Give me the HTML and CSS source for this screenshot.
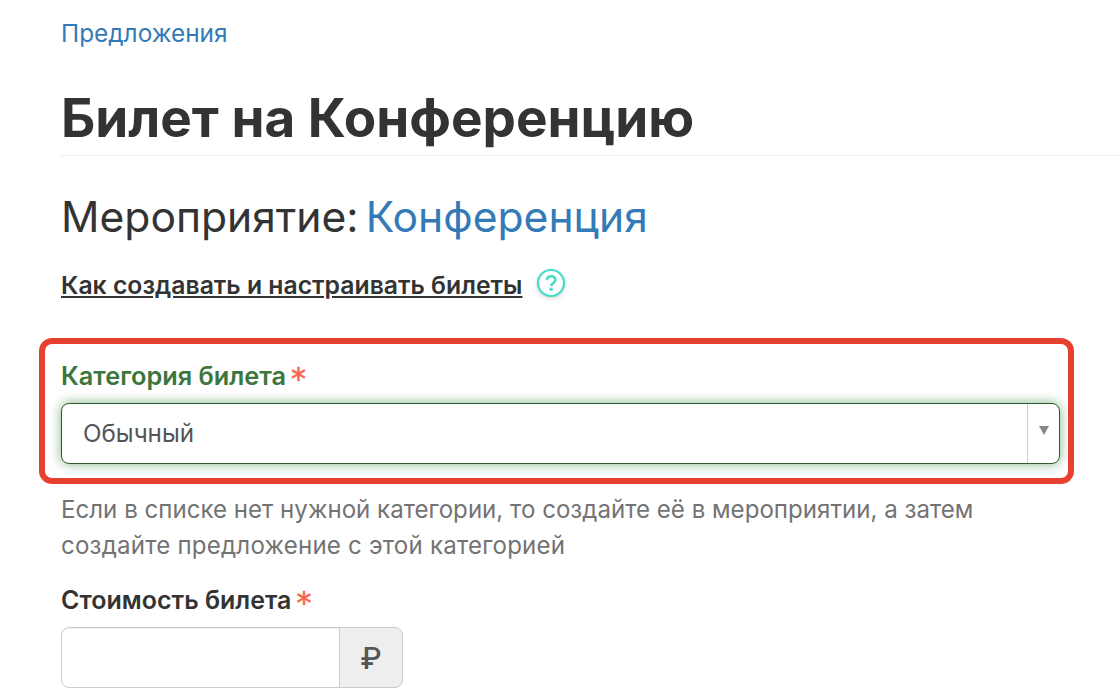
FILE: index.html
```html
<!DOCTYPE html>
<html lang="ru">
<head>
    <meta charset="UTF-8">
    <title>Билет на Конференцию</title>
    <link rel="stylesheet" href="styles.css">
</head>
<body>
    <div class="page">
        <a href="#" class="breadcrumb">Предложения</a>
        <h1 class="page-title">Билет на Конференцию</h1>
        <h2 class="event-title">Мероприятие: <a href="#">Конференция</a></h2>

        <div class="help-row">
            <a href="#" class="help-link">Как создавать и настраивать билеты</a>
            <svg class="help-icon" width="30" height="30" viewBox="0 0 30 30">
                <circle cx="15" cy="14" r="13" fill="#fff" stroke="#45dcc8" stroke-width="2.200"/>
                <path d="M10.8 11.2c.2-2.6 2-4 4.300-4 2.500 0 4.200 1.500 4.200 3.600 0 1.700-.9 2.500-2.100 3.300-1.200.8-1.900 1.400-1.900 2.900" fill="none" stroke="#45dcc8" stroke-width="2.600"/>
                <circle cx="15.100" cy="20.300" r="1.800" fill="#45dcc8"/>
            </svg>
        </div>

        <div class="form-group category-group">
            <label class="field-label" for="category">Категория билета <span class="required">*</span></label>
            <div class="select-box" id="category">
                <span class="select-value">Обычный</span>
                <span class="select-arrow"></span>
            </div>
            <div class="highlight-frame"></div>
        </div>
        <p class="hint">Если в списке нет нужной категории, то создайте её в мероприятии, а затем<br><span class="hint-line">создайте предложение с этой категорией</span></p>

        <div class="form-group price-field">
            <label class="field-label" for="price">Стоимость билета <span class="required">*</span></label>
            <div class="price-group">
                <input type="text" id="price" class="price-input">
                <span class="price-addon">₽</span>
            </div>
        </div>
    </div>
</body>
</html>
```

FILE: styles.css
```css
* {
    margin: 0;
    padding: 0;
    box-sizing: border-box;
}

body {
    font-family: Inter, "Noto Sans", sans-serif;
    color: #333;
    background: #fff;
    overflow: hidden;
}

.page {
    height: 695px;
    padding: 18px 0 0 61px;
}

a {
    color: #337ab7;
    text-decoration: none;
}

.breadcrumb {
    display: block;
    font-size: 24.4px;
    line-height: 30px;
}

.page-title {
    font-size: 53px;
    line-height: 60px;
    font-weight: 700;
    margin-top: 40px;
    padding-bottom: 7px;
    border-bottom: 1px solid #eee;
}

.event-title {
    font-size: 42.6px;
    line-height: 50px;
    font-weight: 400;
    word-spacing: -5px;
    margin-top: 36px;
}

.help-row {
    display: flex;
    align-items: center;
    gap: 14px;
    margin-top: 28px;
}

.help-link {
    color: #333;
    font-size: 24.75px;
    line-height: 30px;
    font-weight: 600;
    text-decoration: underline;
}

.help-icon {
    display: block;
    margin-top: -2px;
    filter: drop-shadow(0 2px 2px rgba(0, 0, 0, 0.14));
}

.form-group {
    position: relative;
}

.category-group {
    width: 999px;
    margin-top: 61px;
}

.field-label {
    display: flex;
    align-items: center;
    gap: 5px;
    font-size: 25.3px;
    line-height: 30px;
    font-weight: 600;
}

.category-group .field-label {
    color: #3c763d;
}

.price-field .field-label {
    font-size: 25px;
}

.required {
    color: #f8654d;
    font-family: "DejaVu Sans", sans-serif;
    font-size: 30px;
    font-weight: 400;
    line-height: 30px;
    height: 30px;
    transform: translateY(3px);
    -webkit-text-stroke: 0.6px #f8654d;
}

.select-box {
    display: flex;
    align-items: center;
    justify-content: space-between;
    height: 61px;
    margin-top: 12px;
    background: #fff;
    border: 1px solid #2f5c32;
    border-radius: 8px;
    box-shadow: 0 0 12px rgba(60, 140, 70, 0.65);
}

.select-value {
    font-size: 24.2px;
    color: #555;
    padding-left: 21px;
}

.select-arrow {
    display: flex;
    align-items: center;
    justify-content: center;
    width: 32px;
    height: 100%;
    border-left: 1px solid #ccc;
}

.select-arrow::after {
    content: "";
    border-left: 5.5px solid transparent;
    border-right: 5.5px solid transparent;
    border-top: 9px solid #888;
    margin-bottom: 6px;
}

.highlight-frame {
    position: absolute;
    left: -22px;
    right: -14px;
    top: -23px;
    bottom: -20px;
    border: 6px solid #e8402f;
    border-radius: 13px;
}

.hint {
    color: #737373;
    font-size: 24.1px;
    line-height: 36px;
    margin-top: 28px;
}

.hint-line {
    letter-spacing: 0.2px;
}

.price-field {
    margin-top: 21px;
}

.price-group {
    display: flex;
    width: 342px;
    height: 61px;
    margin-top: 12px;
}

.price-input {
    flex: 1;
    min-width: 0;
    border: 1px solid #ccc;
    border-radius: 8px 0 0 8px;
    box-shadow: inset 0 1px 1px rgba(0, 0, 0, 0.075);
    outline: none;
}

.price-addon {
    display: flex;
    align-items: center;
    justify-content: center;
    width: 64px;
    margin-left: -1px;
    font-size: 30px;
    font-weight: 500;
    color: #555;
    background: #eee;
    border: 1px solid #ccc;
    border-radius: 0 8px 8px 0;
}
```
